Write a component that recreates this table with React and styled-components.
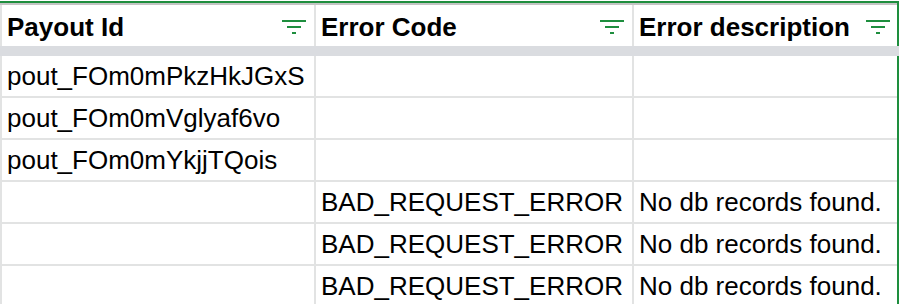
import React from "react";
import styled, { createGlobalStyle } from "styled-components";

const Global = createGlobalStyle`
  html, body { margin: 0; padding: 0; background: #fff; }
  body { font-family: "Liberation Sans", Arial, sans-serif; color: #000; }
`;

const Frame = styled.div`
  width: 900px;
  height: 304px;
  overflow: hidden;
  padding-top: 1px;
  box-sizing: border-box;
  background: #fff;
`;

const Sheet = styled.div`
  width: 899px;
  display: grid;
  grid-template-columns: 314px 318px 265px;
  border-top: 2px solid #1e8e3e;
  border-right: 2px solid #1e8e3e;
  box-sizing: border-box;
  position: relative;
`;

const TopRule = styled.div`
  grid-column: 1 / -1;
  height: 2px;
  background: #c4c4c4;
`;

const HeadCell = styled.div`
  height: 41px;
  box-sizing: border-box;
  border-left: 2px solid #e2e3e3;
  display: flex;
  align-items: flex-end;
  justify-content: space-between;
  padding: 0 8px 4px 5px;
  font-weight: 700;
  font-size: 26px;
  line-height: 30px;
  white-space: nowrap;
`;

const FrozenBand = styled.div`
  grid-column: 1 / -1;
  height: 10px;
  background: #dadce0;
  margin-right: -2px;
  position: relative;
  z-index: 1;
`;

const Cell = styled.div`
  height: 42px;
  box-sizing: border-box;
  border-left: 2px solid #e2e3e3;
  border-bottom: 2px solid #e2e3e3;
  display: flex;
  align-items: flex-end;
  padding: 0 5px 5px 5px;
  font-size: 26px;
  line-height: 30px;
  white-space: nowrap;
  overflow: hidden;
`;

const FilterIcon = styled.svg`
  width: 24px;
  height: 14px;
  flex: none;
  margin-bottom: 8px;
  margin-right: ${(p) => (p.$last ? "-1px" : "0")};
`;

const Filter = ({ last }) => (
  <FilterIcon $last={last} viewBox="0 0 24 14">
    <rect x="0" y="0" width="24" height="2" fill="#1e8e3e" />
    <rect x="5" y="6" width="14" height="2" fill="#1e8e3e" />
    <rect x="10" y="12" width="4" height="2" fill="#1e8e3e" />
  </FilterIcon>
);

const headers = ["Payout Id", "Error Code", "Error description"];
const rows = [
  ["pout_FOm0mPkzHkJGxS", "", ""],
  ["pout_FOm0mVglyaf6vo", "", ""],
  ["pout_FOm0mYkjjTQois", "", ""],
  ["", "BAD_REQUEST_ERROR", "No db records found."],
  ["", "BAD_REQUEST_ERROR", "No db records found."],
  ["", "BAD_REQUEST_ERROR", "No db records found."],
];

export default function App() {
  return (
    <>
      <Global />
      <Frame>
        <Sheet>
          <TopRule />
          {headers.map((h, i) => (
            <HeadCell key={h}>
              <span>{h}</span>
              <Filter last={i === headers.length - 1} />
            </HeadCell>
          ))}
          <FrozenBand />
          {rows.map((r, ri) =>
            r.map((c, ci) => <Cell key={`${ri}-${ci}`}>{c}</Cell>)
          )}
        </Sheet>
      </Frame>
    </>
  );
}
